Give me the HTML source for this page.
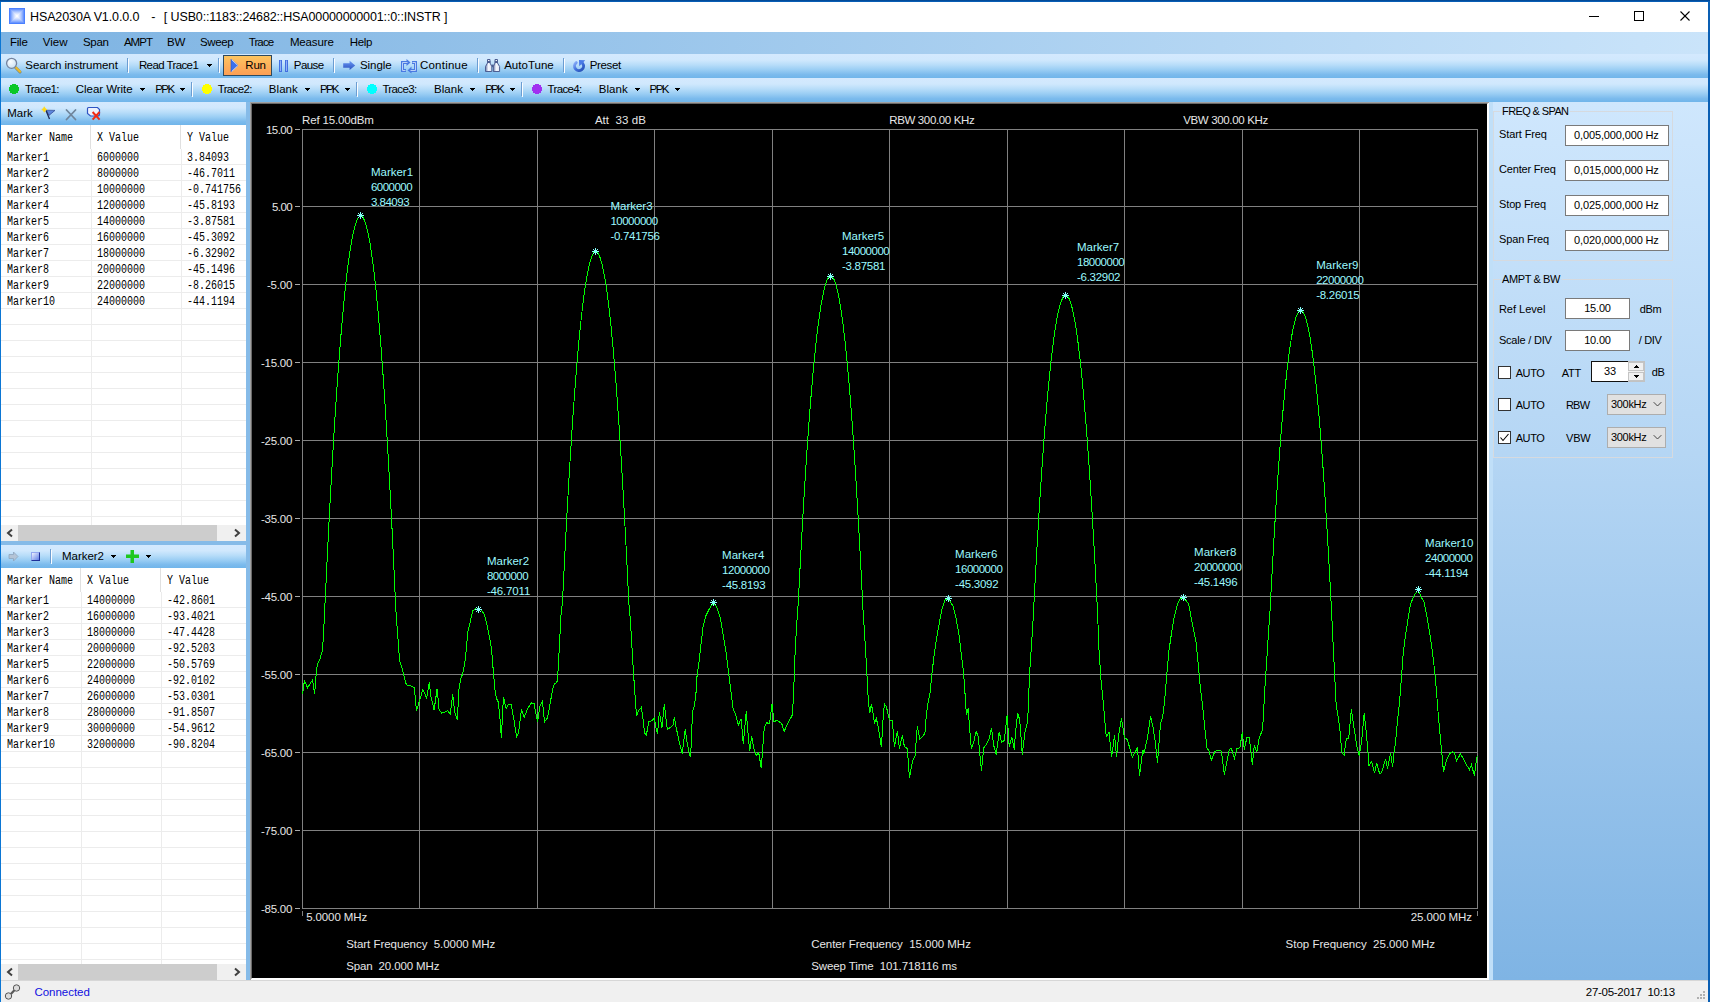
<!DOCTYPE html><html><head><meta charset="utf-8"><title>HSA2030A V1.0.0.0</title><style>
*{box-sizing:border-box;margin:0;padding:0}
html,body{width:1710px;height:1002px;overflow:hidden;background:#fff}
body{position:relative;font-family:"Liberation Sans",sans-serif;font-size:12px;color:#000;line-height:1}
.a{position:absolute;white-space:pre}
.t{position:absolute;white-space:pre;font-size:11.5px;line-height:14px;height:14px;color:#000}
.m{position:absolute;white-space:pre;font-family:"Liberation Mono",monospace;font-size:12px;line-height:14px;height:14px;color:#000;transform-origin:0 50%;transform:scaleX(.8333)}
.p{position:absolute;white-space:pre;font-size:11px;line-height:14px;height:14px;color:#000}
.c{position:absolute;white-space:pre;font-size:11.5px;line-height:14px;height:14px;color:#e6e6e6}
.k{position:absolute;white-space:pre;font-size:11.5px;line-height:14px;height:14px;color:#9cf9ff}
.tb{position:absolute;left:1px;width:1707px;background:linear-gradient(#d4e9fe 0%,#d0e8fd 25%,#b8ddf9 45%,#9bcef4 65%,#7cbbed 85%,#70b5ea 100%)}
.sep{position:absolute;width:1px;height:14px;background:#6b9dd2;box-shadow:1px 1px 0 #fbfdff}
.dot{position:absolute;width:10px;height:10px;border-radius:5px}
.inp{position:absolute;background:#fff;border:1px solid #7a7a7a}
.cb{position:absolute;width:13px;height:13px;background:#fff;border:1px solid #333}
.combo{position:absolute;background:#e1e1e1;border:1px solid #adadad}
.gb{position:absolute;border:1px solid #d6dadf}
.hl{position:absolute;height:1px;background:#ececec}
.vl{position:absolute;width:1px;background:#ececec}
</style></head><body>
<div class="a" style="left:0;top:0;width:1710px;height:2px;background:linear-gradient(#00438c,#0a66c2)"></div>
<div class="a" style="left:0;top:2px;width:1px;height:1000px;background:#0b76d4"></div>
<div class="a" style="left:1708px;top:2px;width:2px;height:1000px;background:#0a5fb4"></div>
<div class="a" style="left:1px;top:2px;width:1707px;height:30px;background:#fff"></div>
<div class="a" style="left:9px;top:8px;width:16px;height:16px;background:#4a80ff"></div><div class="a" style="left:10px;top:9px;width:14px;height:14px;background:#6a96ff"></div><div class="a" style="left:11px;top:10px;width:12px;height:12px;background:#8aadff"></div><div class="a" style="left:12px;top:11px;width:10px;height:10px;background:#a6c1ff"></div><div class="a" style="left:13px;top:12px;width:8px;height:8px;background:#bfd2ff"></div><div class="a" style="left:14px;top:13px;width:6px;height:6px;background:#d6e2ff"></div><div class="a" style="left:15px;top:14px;width:4px;height:4px;background:#eaf0ff"></div><div class="a" style="left:16px;top:15px;width:2px;height:2px;background:#fbfcff"></div>
<div id="title" class="t" style="left:30px;top:9.57px;font-size:12.5px;color:#000"><span style="letter-spacing:-.11px">HSA2030A V1.0.0.0</span><span style="letter-spacing:.5px">   -  </span><span style="letter-spacing:-.13px">[ USB0::1183::24682::HSA00000000001::0::INSTR ]</span></div>
<svg class="a" style="left:1580px;top:2px" width="128" height="30" viewBox="0 0 128 30"><g stroke="#000" stroke-width="1" fill="none" shape-rendering="crispEdges"><line x1="9" y1="14.5" x2="19" y2="14.5"/><rect x="54.5" y="9.5" width="9" height="9"/></g><g stroke="#000" stroke-width="1.1" fill="none"><line x1="100.5" y1="9.5" x2="109.5" y2="18.5"/><line x1="109.5" y1="9.5" x2="100.5" y2="18.5"/></g></svg>
<div class="a" style="left:1px;top:32px;width:1707px;height:22px;background:linear-gradient(90deg,#7db3e2 0%,#cae4fa 100%)"></div>
<div id="x1" class="t" style="left:9.90px;top:35.02px;letter-spacing:-0.187px;">File</div>
<div id="x2" class="t" style="left:42.70px;top:35.02px;letter-spacing:0.041px;">View</div>
<div id="x3" class="t" style="left:83.00px;top:35.02px;letter-spacing:-0.311px;">Span</div>
<div id="x4" class="t" style="left:123.90px;top:35.02px;letter-spacing:-0.963px;">AMPT</div>
<div id="x5" class="t" style="left:167.10px;top:35.02px;letter-spacing:-0.366px;">BW</div>
<div id="x6" class="t" style="left:199.90px;top:35.02px;letter-spacing:-0.331px;">Sweep</div>
<div id="x7" class="t" style="left:248.70px;top:35.02px;letter-spacing:-0.874px;">Trace</div>
<div id="x8" class="t" style="left:289.90px;top:35.02px;letter-spacing:-0.131px;">Measure</div>
<div id="x9" class="t" style="left:349.70px;top:35.02px;letter-spacing:-0.314px;">Help</div>
<div class="tb" style="top:54px;height:24px"></div>
<div class="tb" style="top:78px;height:24px"></div>
<svg class="a" style="left:4px;top:56px" width="19" height="19" viewBox="4 56 19 19"><defs><radialGradient id="lens" cx=".4" cy=".35" r=".7"><stop offset="0" stop-color="#fafdff"/><stop offset="1" stop-color="#c9e0f3"/></radialGradient></defs><line x1="15.8" y1="67.8" x2="20" y2="72" stroke="#5b4a18" stroke-width="3" stroke-linecap="round" opacity=".55"/><line x1="15.6" y1="67.2" x2="20" y2="71.6" stroke="#e8b82c" stroke-width="2.2" stroke-linecap="round"/><circle cx="11.6" cy="63.3" r="5" fill="url(#lens)" stroke="#73839f" stroke-width="1.3"/></svg>
<div id="x10" class="t" style="left:25.30px;top:58.32px;letter-spacing:-0.045px;">Search instrument</div>
<div class="sep" style="left:127px;top:58px"></div>
<div id="x11" class="t" style="left:138.90px;top:58.32px;letter-spacing:-0.593px;">Read Trace1</div>
<svg class="a" style="left:207px;top:64px" width="5" height="3" viewBox="0 0 5 3" shape-rendering="crispEdges"><path d="M0 0h5v1h-1v1h-1v1h-1v-1h-1v-1h-1z" fill="#000"/></svg>
<div class="sep" style="left:218px;top:58px"></div>
<div class="a" style="left:223px;top:55px;width:49px;height:21px;border:1px solid #2d4a60;background:linear-gradient(#fdc560,#fdb05a 50%,#fd9f55)"></div>
<svg class="a" style="left:229px;top:57px" width="11" height="17" viewBox="229 57 11 17"><path d="M231 59L238 65.5L231 72Z" fill="#3d70ea" stroke="#2c55c8" stroke-width=".6"/><path d="M231.6 59.6L237.6 65.3" stroke="#dfe9ff" stroke-width=".8"/><path d="M237.6 65.9L231.6 71.6" stroke="#f4f8ff" stroke-width=".8"/></svg>
<div id="x12" class="t" style="left:245.30px;top:58.32px;letter-spacing:-0.198px;">Run</div>
<svg class="a" style="left:278px;top:59px" width="11" height="14" viewBox="278 59 11 14"><rect x="279" y="60" width="3" height="12" fill="#426fe0"/><rect x="280" y="60.5" width="1" height="10.5" fill="#90b0f6"/><rect x="285" y="60" width="3" height="12" fill="#426fe0"/><rect x="286" y="60.5" width="1" height="10.5" fill="#90b0f6"/></svg>
<div id="x13" class="t" style="left:293.80px;top:58.32px;letter-spacing:-0.579px;">Pause</div>
<div class="sep" style="left:333px;top:58px"></div>
<svg class="a" style="left:342px;top:59px" width="15" height="13" viewBox="342 59 15 13"><defs><linearGradient id="ar" x1="0" y1="0" x2="0" y2="1"><stop offset="0" stop-color="#6a98f4"/><stop offset="1" stop-color="#2a52c0"/></linearGradient></defs><path d="M343.2 63.3H349.6V60.8L355.2 65.4L349.6 70V67.7H343.2Z" fill="url(#ar)"/></svg>
<div id="x14" class="t" style="left:359.90px;top:58.32px;letter-spacing:-0.045px;">Single</div>
<svg class="a" style="left:400px;top:58px" width="18" height="16" viewBox="400 58 18 16"><g fill="none" stroke="#4a7ae2" stroke-width="3" stroke-linejoin="miter"><path d="M407 62.5H402.5V70.5H406"/><path d="M411 70.5H415.5V62.5H412"/></g><path d="M406.5 59L410.5 62.5L406.5 66Z" fill="#4a7ae2"/><path d="M411.5 66.5L407.5 70.5L411.5 73.5Z" fill="#4a7ae2"/><g fill="none" stroke="#b9d0f8" stroke-width="1"><path d="M407.5 62.5H402.5V70.5H405.5"/><path d="M410.5 70.5H415.5V62.5H412.5"/></g></svg>
<div id="x15" class="t" style="left:419.90px;top:58.32px;letter-spacing:0.236px;">Continue</div>
<div class="sep" style="left:477px;top:58px"></div>
<svg class="a" style="left:484px;top:58px" width="18" height="15" viewBox="484 58 18 15"><defs><linearGradient id="bn" x1="0" y1="0" x2="1" y2="0"><stop offset="0" stop-color="#6676aa"/><stop offset=".45" stop-color="#f4f7fd"/><stop offset="1" stop-color="#dfe6f6"/></linearGradient></defs><g stroke="#4d5e92" stroke-width="1" fill="url(#bn)"><path d="M485.5 71.5V66.5L487.5 63V59.5H490V63L491.8 66.5V71.5Z"/><path d="M493.3 71.5V66.5L495 63V59.5H497.5V63L499.6 66.5V71.5Z"/></g><g fill="#4d5e92"><rect x="487" y="61" width="3.4" height="2"/><rect x="494.8" y="61" width="3.2" height="2"/><rect x="491.6" y="64.6" width="2" height="2.6"/></g></svg>
<div id="x16" class="t" style="left:504.20px;top:58.32px;letter-spacing:0.010px;">AutoTune</div>
<div class="sep" style="left:563px;top:58px"></div>
<svg class="a" style="left:571px;top:58px" width="16" height="16" viewBox="571 58 16 16"><defs><linearGradient id="pg" x1="0" y1="0" x2="1" y2="1"><stop offset="0" stop-color="#86aaf8"/><stop offset=".5" stop-color="#3f6fdc"/><stop offset="1" stop-color="#2650b4"/></linearGradient></defs><path d="M576.2 62.6A4.5 4.5 0 1 0 582.6 63.4" fill="none" stroke="url(#pg)" stroke-width="2.9" stroke-linecap="round"/><path d="M579 59.9L585.2 60.3L582.6 63L579.2 66.2Z" fill="#4a7ae6"/></svg>
<div id="x17" class="t" style="left:589.70px;top:58.32px;letter-spacing:-0.336px;">Preset</div>
<svg class="a" style="left:9px;top:84px" width="10" height="10" viewBox="0 0 10 10" shape-rendering="crispEdges"><circle cx="5" cy="5" r="5" fill="#0ac828"/></svg>
<div id="x18" class="t" style="left:24.90px;top:82.02px;letter-spacing:-0.664px;">Trace1:</div>
<div id="x19" class="t" style="left:75.80px;top:82.02px;letter-spacing:-0.054px;">Clear Write</div>
<svg class="a" style="left:140px;top:88px" width="5" height="3" viewBox="0 0 5 3" shape-rendering="crispEdges"><path d="M0 0h5v1h-1v1h-1v1h-1v-1h-1v-1h-1z" fill="#000"/></svg>
<div id="x20" class="t" style="left:155.20px;top:82.02px;letter-spacing:-1.572px;">PPK</div>
<svg class="a" style="left:180px;top:88px" width="5" height="3" viewBox="0 0 5 3" shape-rendering="crispEdges"><path d="M0 0h5v1h-1v1h-1v1h-1v-1h-1v-1h-1z" fill="#000"/></svg>
<div class="sep" style="left:191px;top:82px"></div>
<svg class="a" style="left:202px;top:84px" width="10" height="10" viewBox="0 0 10 10" shape-rendering="crispEdges"><circle cx="5" cy="5" r="5" fill="#ffff00"/></svg>
<div id="x21" class="t" style="left:217.70px;top:82.02px;letter-spacing:-0.635px;">Trace2:</div>
<div id="x22" class="t" style="left:268.80px;top:82.02px;letter-spacing:0.067px;">Blank</div>
<svg class="a" style="left:305px;top:88px" width="5" height="3" viewBox="0 0 5 3" shape-rendering="crispEdges"><path d="M0 0h5v1h-1v1h-1v1h-1v-1h-1v-1h-1z" fill="#000"/></svg>
<div id="x23" class="t" style="left:320.00px;top:82.02px;letter-spacing:-1.739px;">PPK</div>
<svg class="a" style="left:345px;top:88px" width="5" height="3" viewBox="0 0 5 3" shape-rendering="crispEdges"><path d="M0 0h5v1h-1v1h-1v1h-1v-1h-1v-1h-1z" fill="#000"/></svg>
<div class="sep" style="left:356px;top:82px"></div>
<svg class="a" style="left:367px;top:84px" width="10" height="10" viewBox="0 0 10 10" shape-rendering="crispEdges"><circle cx="5" cy="5" r="5" fill="#00ffff"/></svg>
<div id="x24" class="t" style="left:382.40px;top:82.02px;letter-spacing:-0.621px;">Trace3:</div>
<div id="x25" class="t" style="left:434.00px;top:82.02px;letter-spacing:0.067px;">Blank</div>
<svg class="a" style="left:470px;top:88px" width="5" height="3" viewBox="0 0 5 3" shape-rendering="crispEdges"><path d="M0 0h5v1h-1v1h-1v1h-1v-1h-1v-1h-1z" fill="#000"/></svg>
<div id="x26" class="t" style="left:485.20px;top:82.02px;letter-spacing:-1.739px;">PPK</div>
<svg class="a" style="left:510px;top:88px" width="5" height="3" viewBox="0 0 5 3" shape-rendering="crispEdges"><path d="M0 0h5v1h-1v1h-1v1h-1v-1h-1v-1h-1z" fill="#000"/></svg>
<div class="sep" style="left:521px;top:82px"></div>
<svg class="a" style="left:532px;top:84px" width="10" height="10" viewBox="0 0 10 10" shape-rendering="crispEdges"><circle cx="5" cy="5" r="5" fill="#a030f0"/></svg>
<div id="x27" class="t" style="left:547.60px;top:82.02px;letter-spacing:-0.678px;">Trace4:</div>
<div id="x28" class="t" style="left:598.80px;top:82.02px;letter-spacing:0.047px;">Blank</div>
<svg class="a" style="left:635px;top:88px" width="5" height="3" viewBox="0 0 5 3" shape-rendering="crispEdges"><path d="M0 0h5v1h-1v1h-1v1h-1v-1h-1v-1h-1z" fill="#000"/></svg>
<div id="x29" class="t" style="left:649.50px;top:82.02px;letter-spacing:-1.539px;">PPK</div>
<svg class="a" style="left:675px;top:88px" width="5" height="3" viewBox="0 0 5 3" shape-rendering="crispEdges"><path d="M0 0h5v1h-1v1h-1v1h-1v-1h-1v-1h-1z" fill="#000"/></svg>
<div class="a" style="left:1px;top:102px;width:249px;height:878px;background:#86bbe8"></div>
<div class="a" style="left:1px;top:102px;width:245px;height:23px;background:linear-gradient(#d4e9fe 0%,#d0e8fd 25%,#b8ddf9 45%,#9bcef4 65%,#7cbbed 85%,#70b5ea 100%)"></div>
<div id="x30" class="t" style="left:7.30px;top:105.92px;letter-spacing:-0.012px;">Mark</div>
<svg class="a" style="left:41px;top:105px" width="16" height="16" viewBox="41 105 16 16"><path d="M46.2 110.2L55 110.4L49 115.4Z" fill="#5d86dc" stroke="#2c4690" stroke-width=".7"/><line x1="46" y1="110.5" x2="49.5" y2="119" stroke="#1c2a58" stroke-width="1.3"/><path d="M44.3 106.8L45.2 108.6L46.8 109.5L45.2 110.4L44.3 112.2L43.4 110.4L41.8 109.5L43.4 108.6Z" fill="#ffd91c" stroke="#ffd91c" stroke-width=".8"/></svg>
<svg class="a" style="left:64px;top:107px" width="15" height="15" viewBox="64 107 15 15"><g stroke="#6f859b" stroke-width="1.8" stroke-linecap="round"><line x1="66.5" y1="110" x2="75.5" y2="119.5"/><line x1="75.5" y1="110" x2="66.5" y2="119.5"/></g></svg>
<svg class="a" style="left:86px;top:105px" width="16" height="17" viewBox="86 105 16 17"><path d="M88.5 107.5H97.5L99.5 109.5V114Q99.5 116 97.5 116H90.5L87.5 113.5V108.5Q87.5 107.5 88.5 107.5Z" fill="#eef2fd" stroke="#2f55c4" stroke-width="1.2"/><g stroke="#f02a14" stroke-width="2"><line x1="92.6" y1="112" x2="99.6" y2="119.6"/><line x1="99.6" y1="112" x2="92.6" y2="119.6"/></g></svg>
<div class="a" style="left:1px;top:125px;width:245px;height:400px;background:#fff"></div>
<div id="x31" class="m" style="left:7.0px;top:131.1px">Marker Name</div>
<div id="x32" class="m" style="left:97.0px;top:131.1px">X Value</div>
<div id="x33" class="m" style="left:187.0px;top:131.1px">Y Value</div>
<div class="vl" style="left:90px;top:125px;height:24px;background:#e0e0e0"></div>
<div class="vl" style="left:180px;top:125px;height:24px;background:#e0e0e0"></div>
<div class="hl" style="left:1px;top:164px;width:245px"></div>
<div class="hl" style="left:1px;top:180px;width:245px"></div>
<div class="hl" style="left:1px;top:196px;width:245px"></div>
<div class="hl" style="left:1px;top:212px;width:245px"></div>
<div class="hl" style="left:1px;top:228px;width:245px"></div>
<div class="hl" style="left:1px;top:244px;width:245px"></div>
<div class="hl" style="left:1px;top:260px;width:245px"></div>
<div class="hl" style="left:1px;top:276px;width:245px"></div>
<div class="hl" style="left:1px;top:292px;width:245px"></div>
<div class="hl" style="left:1px;top:308px;width:245px"></div>
<div class="hl" style="left:1px;top:324px;width:245px"></div>
<div class="hl" style="left:1px;top:340px;width:245px"></div>
<div class="hl" style="left:1px;top:356px;width:245px"></div>
<div class="hl" style="left:1px;top:372px;width:245px"></div>
<div class="hl" style="left:1px;top:388px;width:245px"></div>
<div class="hl" style="left:1px;top:404px;width:245px"></div>
<div class="hl" style="left:1px;top:420px;width:245px"></div>
<div class="hl" style="left:1px;top:436px;width:245px"></div>
<div class="hl" style="left:1px;top:452px;width:245px"></div>
<div class="hl" style="left:1px;top:468px;width:245px"></div>
<div class="hl" style="left:1px;top:484px;width:245px"></div>
<div class="hl" style="left:1px;top:500px;width:245px"></div>
<div class="hl" style="left:1px;top:516px;width:245px"></div>
<div class="vl" style="left:91px;top:149px;height:376px"></div>
<div class="vl" style="left:181px;top:149px;height:376px"></div>
<div id="x34" class="m" style="left:7.0px;top:150.8px">Marker1</div>
<div id="x35" class="m" style="left:97.0px;top:150.8px">6000000</div>
<div id="x36" class="m" style="left:187.0px;top:150.8px">3.84093</div>
<div id="x37" class="m" style="left:7.0px;top:166.8px">Marker2</div>
<div id="x38" class="m" style="left:97.0px;top:166.8px">8000000</div>
<div id="x39" class="m" style="left:187.0px;top:166.8px">-46.7011</div>
<div id="x40" class="m" style="left:7.0px;top:182.8px">Marker3</div>
<div id="x41" class="m" style="left:97.0px;top:182.8px">10000000</div>
<div id="x42" class="m" style="left:187.0px;top:182.8px">-0.741756</div>
<div id="x43" class="m" style="left:7.0px;top:198.8px">Marker4</div>
<div id="x44" class="m" style="left:97.0px;top:198.8px">12000000</div>
<div id="x45" class="m" style="left:187.0px;top:198.8px">-45.8193</div>
<div id="x46" class="m" style="left:7.0px;top:214.8px">Marker5</div>
<div id="x47" class="m" style="left:97.0px;top:214.8px">14000000</div>
<div id="x48" class="m" style="left:187.0px;top:214.8px">-3.87581</div>
<div id="x49" class="m" style="left:7.0px;top:230.8px">Marker6</div>
<div id="x50" class="m" style="left:97.0px;top:230.8px">16000000</div>
<div id="x51" class="m" style="left:187.0px;top:230.8px">-45.3092</div>
<div id="x52" class="m" style="left:7.0px;top:246.8px">Marker7</div>
<div id="x53" class="m" style="left:97.0px;top:246.8px">18000000</div>
<div id="x54" class="m" style="left:187.0px;top:246.8px">-6.32902</div>
<div id="x55" class="m" style="left:7.0px;top:262.8px">Marker8</div>
<div id="x56" class="m" style="left:97.0px;top:262.8px">20000000</div>
<div id="x57" class="m" style="left:187.0px;top:262.8px">-45.1496</div>
<div id="x58" class="m" style="left:7.0px;top:278.8px">Marker9</div>
<div id="x59" class="m" style="left:97.0px;top:278.8px">22000000</div>
<div id="x60" class="m" style="left:187.0px;top:278.8px">-8.26015</div>
<div id="x61" class="m" style="left:7.0px;top:294.8px">Marker10</div>
<div id="x62" class="m" style="left:97.0px;top:294.8px">24000000</div>
<div id="x63" class="m" style="left:187.0px;top:294.8px">-44.1194</div>
<div class="a" style="left:1px;top:568px;width:245px;height:396px;background:#fff"></div>
<div id="x64" class="m" style="left:7.0px;top:574.1px">Marker Name</div>
<div id="x65" class="m" style="left:87.0px;top:574.1px">X Value</div>
<div id="x66" class="m" style="left:167.0px;top:574.1px">Y Value</div>
<div class="vl" style="left:80px;top:568px;height:24px;background:#e0e0e0"></div>
<div class="vl" style="left:160px;top:568px;height:24px;background:#e0e0e0"></div>
<div class="hl" style="left:1px;top:607px;width:245px"></div>
<div class="hl" style="left:1px;top:623px;width:245px"></div>
<div class="hl" style="left:1px;top:639px;width:245px"></div>
<div class="hl" style="left:1px;top:655px;width:245px"></div>
<div class="hl" style="left:1px;top:671px;width:245px"></div>
<div class="hl" style="left:1px;top:687px;width:245px"></div>
<div class="hl" style="left:1px;top:703px;width:245px"></div>
<div class="hl" style="left:1px;top:719px;width:245px"></div>
<div class="hl" style="left:1px;top:735px;width:245px"></div>
<div class="hl" style="left:1px;top:751px;width:245px"></div>
<div class="hl" style="left:1px;top:767px;width:245px"></div>
<div class="hl" style="left:1px;top:783px;width:245px"></div>
<div class="hl" style="left:1px;top:799px;width:245px"></div>
<div class="hl" style="left:1px;top:815px;width:245px"></div>
<div class="hl" style="left:1px;top:831px;width:245px"></div>
<div class="hl" style="left:1px;top:847px;width:245px"></div>
<div class="hl" style="left:1px;top:863px;width:245px"></div>
<div class="hl" style="left:1px;top:879px;width:245px"></div>
<div class="hl" style="left:1px;top:895px;width:245px"></div>
<div class="hl" style="left:1px;top:911px;width:245px"></div>
<div class="hl" style="left:1px;top:927px;width:245px"></div>
<div class="hl" style="left:1px;top:943px;width:245px"></div>
<div class="hl" style="left:1px;top:959px;width:245px"></div>
<div class="vl" style="left:81px;top:592px;height:372px"></div>
<div class="vl" style="left:161px;top:592px;height:372px"></div>
<div id="x67" class="m" style="left:7.0px;top:593.8px">Marker1</div>
<div id="x68" class="m" style="left:87.0px;top:593.8px">14000000</div>
<div id="x69" class="m" style="left:167.0px;top:593.8px">-42.8601</div>
<div id="x70" class="m" style="left:7.0px;top:609.8px">Marker2</div>
<div id="x71" class="m" style="left:87.0px;top:609.8px">16000000</div>
<div id="x72" class="m" style="left:167.0px;top:609.8px">-93.4021</div>
<div id="x73" class="m" style="left:7.0px;top:625.8px">Marker3</div>
<div id="x74" class="m" style="left:87.0px;top:625.8px">18000000</div>
<div id="x75" class="m" style="left:167.0px;top:625.8px">-47.4428</div>
<div id="x76" class="m" style="left:7.0px;top:641.8px">Marker4</div>
<div id="x77" class="m" style="left:87.0px;top:641.8px">20000000</div>
<div id="x78" class="m" style="left:167.0px;top:641.8px">-92.5203</div>
<div id="x79" class="m" style="left:7.0px;top:657.8px">Marker5</div>
<div id="x80" class="m" style="left:87.0px;top:657.8px">22000000</div>
<div id="x81" class="m" style="left:167.0px;top:657.8px">-50.5769</div>
<div id="x82" class="m" style="left:7.0px;top:673.8px">Marker6</div>
<div id="x83" class="m" style="left:87.0px;top:673.8px">24000000</div>
<div id="x84" class="m" style="left:167.0px;top:673.8px">-92.0102</div>
<div id="x85" class="m" style="left:7.0px;top:689.8px">Marker7</div>
<div id="x86" class="m" style="left:87.0px;top:689.8px">26000000</div>
<div id="x87" class="m" style="left:167.0px;top:689.8px">-53.0301</div>
<div id="x88" class="m" style="left:7.0px;top:705.8px">Marker8</div>
<div id="x89" class="m" style="left:87.0px;top:705.8px">28000000</div>
<div id="x90" class="m" style="left:167.0px;top:705.8px">-91.8507</div>
<div id="x91" class="m" style="left:7.0px;top:721.8px">Marker9</div>
<div id="x92" class="m" style="left:87.0px;top:721.8px">30000000</div>
<div id="x93" class="m" style="left:167.0px;top:721.8px">-54.9612</div>
<div id="x94" class="m" style="left:7.0px;top:737.8px">Marker10</div>
<div id="x95" class="m" style="left:87.0px;top:737.8px">32000000</div>
<div id="x96" class="m" style="left:167.0px;top:737.8px">-90.8204</div>
<div class="a" style="left:1px;top:525px;width:245px;height:16px;background:#f0f0f0"></div>
<div class="a" style="left:18px;top:525px;width:199px;height:16px;background:#cdcdcd"></div>
<svg class="a" style="left:1px;top:525px" width="245" height="16" viewBox="0 0 245 16"><g fill="none" stroke="#404040" stroke-width="2"><path d="M11 4.5L7 8L11 11.5"/><path d="M234 4.5L238 8L234 11.5"/></g></svg>
<div class="a" style="left:1px;top:964px;width:245px;height:16px;background:#f0f0f0"></div>
<div class="a" style="left:18px;top:964px;width:199px;height:16px;background:#cdcdcd"></div>
<svg class="a" style="left:1px;top:964px" width="245" height="16" viewBox="0 0 245 16"><g fill="none" stroke="#404040" stroke-width="2"><path d="M11 4.5L7 8L11 11.5"/><path d="M234 4.5L238 8L234 11.5"/></g></svg>
<div class="a" style="left:1px;top:545px;width:245px;height:23px;background:linear-gradient(#d4e9fe 0%,#d0e8fd 25%,#b8ddf9 45%,#9bcef4 65%,#7cbbed 85%,#70b5ea 100%)"></div>
<svg class="a" style="left:8px;top:551px" width="11" height="11" viewBox="0 0 11 11"><path d="M1 3.5h4.5V1L10 5.5L5.5 10V7.5H1Z" fill="#b4c4d6" stroke="#8ea4bc" stroke-width=".8"/></svg>
<div class="a" style="left:31px;top:552px;width:9px;height:9px;border-style:solid;border-width:1px;border-color:#93a8f0 #1e2f9a #1e2f9a #93a8f0;background:linear-gradient(135deg,#eef2ff,#5f7fe6)"></div>
<div class="sep" style="left:50px;top:549px"></div>
<div id="x97" class="t" style="left:62.10px;top:549.02px;letter-spacing:-0.051px;">Marker2</div>
<svg class="a" style="left:111px;top:555px" width="5" height="3" viewBox="0 0 5 3" shape-rendering="crispEdges"><path d="M0 0h5v1h-1v1h-1v1h-1v-1h-1v-1h-1z" fill="#000"/></svg>
<svg class="a" style="left:125px;top:549px" width="15" height="15" viewBox="0 0 15 15"><path d="M5.5 1h3.5v4.5H14V9H9v5H5.5V9H1V5.5h4.5Z" fill="#1ec81e"/></svg>
<svg class="a" style="left:146px;top:555px" width="5" height="3" viewBox="0 0 5 3" shape-rendering="crispEdges"><path d="M0 0h5v1h-1v1h-1v1h-1v-1h-1v-1h-1z" fill="#000"/></svg>
<div class="a" style="left:250px;top:102px;width:1239px;height:878px;background:#000;border-style:solid;border-width:2px;border-color:#696969 #fff #fff #696969;box-shadow:inset 0 0 0 0 #000"></div>
<div class="a" style="left:250px;top:102px;width:1239px;height:1px;background:#a0a0a0"></div>
<div class="a" style="left:250px;top:102px;width:1px;height:878px;background:#a0a0a0"></div>
<svg class="a" style="left:0;top:0" width="1710" height="1002" viewBox="0 0 1710 1002"><g stroke="#808080" stroke-width="1" shape-rendering="crispEdges"><line x1="302.5" y1="129" x2="302.5" y2="909"/><line x1="419.5" y1="129" x2="419.5" y2="909"/><line x1="537.5" y1="129" x2="537.5" y2="909"/><line x1="654.5" y1="129" x2="654.5" y2="909"/><line x1="772.5" y1="129" x2="772.5" y2="909"/><line x1="889.5" y1="129" x2="889.5" y2="909"/><line x1="1007.5" y1="129" x2="1007.5" y2="909"/><line x1="1124.5" y1="129" x2="1124.5" y2="909"/><line x1="1242.5" y1="129" x2="1242.5" y2="909"/><line x1="1359.5" y1="129" x2="1359.5" y2="909"/><line x1="1477.5" y1="129" x2="1477.5" y2="909"/><line x1="302" y1="129.5" x2="1478" y2="129.5"/><line x1="295" y1="129.5" x2="300" y2="129.5" stroke="#a8a8a8"/><line x1="302" y1="206.5" x2="1478" y2="206.5"/><line x1="295" y1="206.5" x2="300" y2="206.5" stroke="#a8a8a8"/><line x1="302" y1="284.5" x2="1478" y2="284.5"/><line x1="295" y1="284.5" x2="300" y2="284.5" stroke="#a8a8a8"/><line x1="302" y1="362.5" x2="1478" y2="362.5"/><line x1="295" y1="362.5" x2="300" y2="362.5" stroke="#a8a8a8"/><line x1="302" y1="440.5" x2="1478" y2="440.5"/><line x1="295" y1="440.5" x2="300" y2="440.5" stroke="#a8a8a8"/><line x1="302" y1="518.5" x2="1478" y2="518.5"/><line x1="295" y1="518.5" x2="300" y2="518.5" stroke="#a8a8a8"/><line x1="302" y1="596.5" x2="1478" y2="596.5"/><line x1="295" y1="596.5" x2="300" y2="596.5" stroke="#a8a8a8"/><line x1="302" y1="674.5" x2="1478" y2="674.5"/><line x1="295" y1="674.5" x2="300" y2="674.5" stroke="#a8a8a8"/><line x1="302" y1="752.5" x2="1478" y2="752.5"/><line x1="295" y1="752.5" x2="300" y2="752.5" stroke="#a8a8a8"/><line x1="302" y1="830.5" x2="1478" y2="830.5"/><line x1="295" y1="830.5" x2="300" y2="830.5" stroke="#a8a8a8"/><line x1="302" y1="908.5" x2="1478" y2="908.5"/><line x1="295" y1="908.5" x2="300" y2="908.5" stroke="#a8a8a8"/><line x1="302.5" y1="911" x2="302.5" y2="916"/><line x1="1477.5" y1="911" x2="1477.5" y2="916"/></g><polyline fill="none" stroke="#00ff00" stroke-width="1" shape-rendering="crispEdges" points="302.6,693.8 304.4,680.8 307.6,687.8 312.6,679.8 314.6,693.8 316.6,668.8 317.6,663.9 320.0,658.9 322.0,651.9 323.5,637.9 324.3,616.0 325.3,598.0 326.3,576.7 327.3,556.1 328.3,536.1 329.3,516.6 330.3,497.8 331.3,479.6 332.3,462.0 333.3,445.0 334.3,428.6 335.3,412.8 336.3,397.7 337.3,383.1 338.3,369.2 339.3,355.8 340.3,343.1 341.3,330.9 342.3,319.4 343.3,308.5 344.3,298.2 345.3,288.5 346.3,279.4 347.3,270.9 348.3,263.1 349.3,255.8 350.3,249.1 351.3,243.1 352.3,237.6 353.3,232.8 354.3,228.6 355.3,225.0 356.3,221.9 357.3,219.5 358.3,217.8 359.3,216.6 360.3,216.0 361.3,216.0 362.3,216.7 363.3,218.0 364.3,220.0 365.3,222.6 366.3,225.8 367.3,229.7 368.3,234.2 369.3,239.3 370.3,245.1 371.3,251.5 372.3,258.6 373.3,266.3 374.3,274.7 375.3,283.7 376.3,293.3 377.3,303.6 378.3,314.5 379.3,326.0 380.3,338.2 381.3,351.0 382.3,364.5 383.3,378.6 384.3,393.4 385.3,408.8 386.3,424.8 387.3,441.5 388.3,458.8 389.3,476.7 390.3,495.3 391.3,514.5 392.3,534.4 393.3,554.9 394.3,576.1 395.8,609.0 397.2,628.0 398.4,644.0 399.2,655.9 400.2,662.9 402.4,668.8 404.4,677.8 406.4,684.8 410.8,685.8 414.4,687.8 416.4,710.8 419.2,701.8 422.8,689.8 426.7,697.8 429.3,682.2 430.7,695.8 434.1,709.8 437.1,688.8 439.1,709.8 441.7,713.2 447.7,710.8 450.3,714.2 452.7,693.8 454.7,711.8 457.3,719.7 459.1,687.8 460.7,678.8 462.7,673.8 464.7,663.9 466.3,649.9 467.7,631.9 469.1,626.9 470.7,619.9 472.6,611.0 475.6,609.0 478.2,609.6 481.6,610.0 484.6,615.0 486.6,623.0 489.6,637.9 491.6,649.9 493.2,669.8 495.2,691.8 496.6,698.8 498.2,701.8 499.6,713.8 501.4,737.7 503.4,696.8 506.2,708.8 508.6,704.2 511.2,704.8 513.6,717.7 516.6,736.7 518.6,732.7 521.5,708.8 524.1,717.7 527.5,708.8 531.5,702.8 534.1,703.8 537.5,721.7 540.1,705.8 542.5,701.4 544.5,721.7 547.5,717.7 550.1,703.8 552.5,689.8 554.5,683.8 556.9,682.8 558.1,669.8 559.5,643.9 560.9,616.0 562.5,602.0 563.5,581.2 564.5,561.1 565.5,541.6 566.5,522.8 567.5,504.5 568.5,487.0 569.5,470.0 570.5,453.7 571.5,438.0 572.5,422.9 573.5,408.5 574.5,394.7 575.5,381.6 576.5,369.1 577.5,357.2 578.5,345.9 579.5,335.3 580.5,325.3 581.5,316.0 582.5,307.3 583.5,299.2 584.5,291.7 585.5,284.9 586.5,278.7 587.5,273.2 588.5,268.3 589.5,264.0 590.5,260.4 591.5,257.4 592.5,255.0 593.5,253.2 594.5,252.1 595.5,251.6 596.5,251.8 597.5,252.6 598.5,254.1 599.5,256.1 600.5,258.9 601.5,262.2 602.5,266.2 603.5,270.9 604.5,276.2 605.5,282.1 606.5,288.7 607.5,295.9 608.5,303.8 609.5,312.3 610.5,321.4 611.5,331.2 612.5,341.6 613.5,352.7 614.5,364.4 615.5,376.7 616.5,389.7 617.5,403.3 618.5,417.6 619.5,432.5 620.5,448.0 621.5,464.2 622.5,481.1 623.5,498.6 624.5,516.7 625.5,535.4 626.5,554.8 627.5,574.9 628.9,604.0 630.5,621.9 631.9,645.9 633.3,669.8 634.9,693.8 636.5,716.1 638.5,710.8 641.3,707.4 642.9,717.7 644.5,732.7 646.3,735.3 648.9,721.7 651.9,720.7 654.3,718.3 655.9,727.7 657.5,734.1 659.3,712.2 661.9,727.7 664.3,704.2 665.9,717.7 667.3,729.7 670.4,727.3 672.8,725.7 674.4,717.3 676.2,727.7 678.8,739.7 682.2,754.1 685.2,729.1 687.2,743.7 690.2,757.3 691.4,743.7 692.4,712.2 694.4,705.8 695.8,695.8 697.2,673.8 698.8,663.9 700.8,645.9 703.2,625.9 705.8,616.0 709.8,608.0 713.4,602.6 716.8,607.0 720.3,617.9 722.7,631.9 725.7,649.9 728.3,669.8 730.7,689.8 733.1,708.8 735.7,714.8 738.3,725.3 741.1,718.7 743.3,744.1 746.3,711.2 747.7,729.7 749.7,751.3 751.7,735.7 753.7,747.7 756.1,755.7 758.7,752.7 761.3,768.2 762.7,747.7 764.3,727.7 766.7,722.7 769.6,723.7 772.0,703.8 774.0,721.7 777.0,720.3 781.6,723.3 784.2,731.3 788.6,721.7 792.2,715.3 793.2,701.8 794.2,677.8 795.2,649.9 796.6,625.9 798.2,604.0 799.2,584.2 800.2,564.9 801.2,546.3 802.2,528.3 803.2,511.0 804.2,494.2 805.2,478.1 806.2,462.6 807.2,447.7 808.2,433.4 809.2,419.8 810.2,406.8 811.2,394.3 812.2,382.6 813.2,371.4 814.2,360.8 815.2,350.9 816.2,341.6 817.2,332.9 818.2,324.8 819.2,317.3 820.2,310.5 821.2,304.3 822.2,298.7 823.2,293.7 824.2,289.3 825.2,285.6 826.2,282.5 827.2,279.9 828.2,278.1 829.2,276.8 830.2,276.1 831.2,276.1 832.2,276.7 833.2,278.0 834.2,279.9 835.2,282.4 836.2,285.6 837.2,289.4 838.2,293.9 839.2,299.0 840.2,304.7 841.2,311.1 842.2,318.1 843.2,325.8 844.2,334.1 845.2,343.1 846.2,352.7 847.2,362.9 848.2,373.8 849.2,385.4 850.2,397.5 851.2,410.4 852.2,423.8 853.2,437.9 854.2,452.6 855.2,468.0 856.2,484.1 857.2,500.7 858.2,518.0 859.2,536.0 860.2,554.6 861.2,573.8 862.2,593.7 862.9,608.0 864.5,631.9 865.9,655.9 867.1,677.8 868.4,701.8 869.8,713.4 871.4,704.2 872.8,711.8 874.4,722.7 876.4,718.7 878.4,727.7 881.4,747.3 883.0,719.7 884.4,703.8 886.4,706.8 889.4,719.7 892.4,720.7 894.4,746.7 897.4,730.7 899.4,748.7 902.4,735.3 904.4,746.7 907.4,748.7 909.4,778.2 912.4,761.7 915.0,755.7 917.3,726.3 919.9,739.3 924.9,733.7 926.3,715.7 927.9,703.8 929.9,693.8 931.9,673.8 934.3,653.9 937.3,633.9 939.9,619.9 942.3,608.0 944.9,600.0 948.3,598.6 952.9,606.0 955.9,617.9 958.9,633.9 961.3,653.9 963.5,671.8 964.9,691.8 966.4,715.3 968.2,707.8 969.4,725.7 971.4,749.3 973.8,741.7 976.2,731.3 978.2,736.7 981.4,770.6 983.8,747.7 986.8,743.7 989.4,737.7 991.4,727.7 993.8,745.7 996.2,754.7 999.2,731.7 1001.4,742.1 1004.2,740.7 1007.2,714.8 1009.2,746.7 1011.8,736.7 1014.4,749.7 1015.3,733.7 1017.7,713.4 1019.7,719.7 1022.3,754.7 1024.7,733.7 1027.1,723.7 1028.3,709.8 1029.1,685.8 1030.1,665.8 1031.7,641.9 1033.3,616.0 1034.3,596.5 1035.3,577.7 1036.3,559.4 1037.3,541.8 1038.3,524.7 1039.3,508.3 1040.3,492.5 1041.3,477.3 1042.3,462.7 1043.3,448.7 1044.3,435.3 1045.3,422.6 1046.3,410.4 1047.3,398.9 1048.3,387.9 1049.3,377.6 1050.3,367.9 1051.3,358.8 1052.3,350.3 1053.3,342.4 1054.3,335.1 1055.3,328.4 1056.3,322.4 1057.3,316.9 1058.3,312.1 1059.3,307.8 1060.3,304.2 1061.3,301.2 1062.3,298.8 1063.3,297.0 1064.3,295.8 1065.3,295.2 1066.3,295.2 1067.3,295.9 1068.3,297.2 1069.3,299.1 1070.3,301.7 1071.3,304.8 1072.3,308.6 1073.3,313.1 1074.3,318.1 1075.3,323.8 1076.3,330.1 1077.3,337.1 1078.3,344.7 1079.3,352.9 1080.3,361.7 1081.3,371.2 1082.3,381.2 1083.3,392.0 1084.3,403.3 1085.3,415.3 1086.3,427.9 1087.3,441.1 1088.3,455.0 1089.3,469.5 1090.3,484.6 1091.3,500.3 1092.3,516.7 1093.3,533.7 1094.3,551.4 1095.3,569.6 1096.3,588.5 1097.6,614.0 1099.0,649.9 1101.0,679.8 1103.6,705.8 1106.2,736.7 1109.0,732.1 1111.6,756.7 1114.6,735.3 1116.5,756.7 1118.9,733.7 1121.5,718.3 1124.5,737.7 1127.5,739.7 1130.1,749.7 1132.5,757.3 1137.5,747.7 1139.5,775.6 1142.9,749.7 1143.9,753.7 1147.5,737.7 1150.5,716.1 1153.1,727.7 1155.5,743.7 1157.5,762.7 1160.5,723.7 1162.5,717.7 1164.5,701.8 1166.5,677.8 1168.8,651.9 1171.4,633.9 1174.4,616.0 1177.4,604.0 1179.8,599.0 1183.2,597.6 1186.4,601.0 1188.6,604.0 1192.0,621.9 1196.0,641.9 1198.0,661.9 1200.0,683.8 1203.0,709.8 1205.0,729.7 1207.0,747.7 1209.0,751.3 1211.3,760.3 1214.9,751.3 1217.9,750.1 1221.5,751.3 1224.3,774.6 1226.9,761.7 1229.3,749.7 1231.3,748.3 1234.5,758.3 1236.9,748.7 1239.9,747.7 1242.3,732.3 1244.3,749.7 1246.9,737.3 1249.3,737.3 1252.3,764.7 1254.3,745.7 1256.9,751.7 1259.3,737.7 1262.2,730.7 1263.4,717.7 1264.4,695.8 1265.8,673.8 1267.4,649.9 1268.8,627.9 1270.2,608.0 1271.2,588.8 1272.2,570.3 1273.2,552.4 1274.2,535.1 1275.2,518.5 1276.2,502.5 1277.2,487.2 1278.2,472.5 1279.2,458.4 1280.2,444.9 1281.2,432.2 1282.2,420.0 1283.2,408.5 1284.2,397.6 1285.2,387.4 1286.2,377.7 1287.2,368.8 1288.2,360.5 1289.2,352.8 1290.2,345.7 1291.2,339.3 1292.2,333.5 1293.2,328.4 1294.2,323.9 1295.2,320.0 1296.2,316.8 1297.2,314.2 1298.2,312.3 1299.2,311.0 1300.2,310.3 1301.2,310.3 1302.2,310.9 1303.2,312.1 1304.2,314.0 1305.2,316.5 1306.2,319.6 1307.2,323.4 1308.2,327.8 1309.2,332.8 1310.2,338.5 1311.2,344.8 1312.2,351.8 1313.2,359.4 1314.2,367.6 1315.2,376.4 1316.2,385.9 1317.2,396.0 1318.2,406.8 1319.2,418.2 1320.2,430.2 1321.2,442.8 1322.2,456.1 1323.2,470.0 1324.2,484.6 1325.2,499.8 1326.2,515.6 1327.2,532.1 1328.2,549.2 1329.2,566.9 1330.2,585.3 1331.7,614.0 1333.1,643.9 1334.7,675.8 1336.1,703.8 1338.3,717.7 1340.3,733.7 1341.7,751.7 1344.1,755.3 1346.3,738.7 1348.7,738.7 1351.3,709.4 1353.7,725.7 1356.7,745.7 1359.3,755.7 1361.6,741.7 1364.2,713.4 1366.6,735.7 1369.0,765.6 1371.6,761.7 1374.6,773.2 1376.6,762.7 1379.6,773.6 1381.6,772.6 1385.6,758.7 1387.6,768.6 1390.6,753.3 1392.6,767.2 1394.2,751.3 1395.6,741.7 1397.6,719.7 1399.6,701.8 1401.6,675.8 1403.2,653.9 1405.2,637.9 1407.6,621.9 1410.5,604.0 1414.5,595.0 1418.2,589.6 1421.1,597.0 1424.1,602.0 1426.5,614.0 1429.5,631.9 1432.5,651.9 1434.5,669.8 1436.5,691.8 1438.5,717.7 1440.5,739.7 1441.9,753.7 1443.5,772.0 1446.5,759.7 1449.5,753.7 1452.5,751.7 1454.5,752.7 1456.5,761.3 1460.4,753.7 1463.4,758.7 1466.4,764.7 1469.4,769.6 1471.4,764.7 1474.4,775.6 1476.4,759.7 1477.4,755.7"/><g fill="#86fffa" shape-rendering="crispEdges"><path d="M359 214h3v3h-3zM357 215h7v1h-7zM360 212h1v7h-1zM358 213h1v1h-1zM362 213h1v1h-1zM358 217h1v1h-1zM362 217h1v1h-1z"/><path d="M477 608h3v3h-3zM475 609h7v1h-7zM478 606h1v7h-1zM476 607h1v1h-1zM480 607h1v1h-1zM476 611h1v1h-1zM480 611h1v1h-1z"/><path d="M594 250h3v3h-3zM592 251h7v1h-7zM595 248h1v7h-1zM593 249h1v1h-1zM597 249h1v1h-1zM593 253h1v1h-1zM597 253h1v1h-1z"/><path d="M712 601h3v3h-3zM710 602h7v1h-7zM713 599h1v7h-1zM711 600h1v1h-1zM715 600h1v1h-1zM711 604h1v1h-1zM715 604h1v1h-1z"/><path d="M829 275h3v3h-3zM827 276h7v1h-7zM830 273h1v7h-1zM828 274h1v1h-1zM832 274h1v1h-1zM828 278h1v1h-1zM832 278h1v1h-1z"/><path d="M947 597h3v3h-3zM945 598h7v1h-7zM948 595h1v7h-1zM946 596h1v1h-1zM950 596h1v1h-1zM946 600h1v1h-1zM950 600h1v1h-1z"/><path d="M1064 294h3v3h-3zM1062 295h7v1h-7zM1065 292h1v7h-1zM1063 293h1v1h-1zM1067 293h1v1h-1zM1063 297h1v1h-1zM1067 297h1v1h-1z"/><path d="M1182 596h3v3h-3zM1180 597h7v1h-7zM1183 594h1v7h-1zM1181 595h1v1h-1zM1185 595h1v1h-1zM1181 599h1v1h-1zM1185 599h1v1h-1z"/><path d="M1299 309h3v3h-3zM1297 310h7v1h-7zM1300 307h1v7h-1zM1298 308h1v1h-1zM1302 308h1v1h-1zM1298 312h1v1h-1zM1302 312h1v1h-1z"/><path d="M1417 588h3v3h-3zM1415 589h7v1h-7zM1418 586h1v7h-1zM1416 587h1v1h-1zM1420 587h1v1h-1zM1416 591h1v1h-1zM1420 591h1v1h-1z"/></g></svg>
<div id="x98" class="c" style="left:265.90px;top:122.82px;letter-spacing:-0.510px;">15.00</div>
<div id="x99" class="c" style="left:271.90px;top:199.82px;letter-spacing:-0.540px;">5.00</div>
<div id="x100" class="c" style="left:266.90px;top:277.82px;letter-spacing:-0.198px;">-5.00</div>
<div id="x101" class="c" style="left:260.90px;top:355.82px;letter-spacing:-0.230px;">-15.00</div>
<div id="x102" class="c" style="left:260.90px;top:433.82px;letter-spacing:-0.230px;">-25.00</div>
<div id="x103" class="c" style="left:260.90px;top:511.82px;letter-spacing:-0.230px;">-35.00</div>
<div id="x104" class="c" style="left:260.90px;top:589.82px;letter-spacing:-0.230px;">-45.00</div>
<div id="x105" class="c" style="left:260.90px;top:667.82px;letter-spacing:-0.230px;">-55.00</div>
<div id="x106" class="c" style="left:260.90px;top:745.82px;letter-spacing:-0.230px;">-65.00</div>
<div id="x107" class="c" style="left:260.90px;top:823.82px;letter-spacing:-0.230px;">-75.00</div>
<div id="x108" class="c" style="left:260.90px;top:901.82px;letter-spacing:-0.230px;">-85.00</div>
<div id="x109" class="c" style="left:302.00px;top:113.02px;letter-spacing:-0.147px;">Ref 15.00dBm</div>
<div id="x110" class="c" style="left:594.90px;top:113.02px;letter-spacing:0.055px;">Att  33 dB</div>
<div id="x111" class="c" style="left:889.20px;top:113.02px;letter-spacing:-0.350px;">RBW 300.00 KHz</div>
<div id="x112" class="c" style="left:1183.20px;top:113.02px;letter-spacing:-0.347px;">VBW 300.00 KHz</div>
<div id="x113" class="c" style="left:306.20px;top:910.02px;letter-spacing:-0.117px;">5.0000 MHz</div>
<div id="x114" class="c" style="left:1410.70px;top:910.02px;letter-spacing:-0.067px;">25.000 MHz</div>
<div id="x115" class="c" style="left:346.20px;top:937.02px;letter-spacing:-0.041px;">Start Frequency  5.0000 MHz</div>
<div id="x116" class="c" style="left:346.20px;top:958.72px;letter-spacing:-0.137px;">Span  20.000 MHz</div>
<div id="x117" class="c" style="left:811.20px;top:937.02px;letter-spacing:-0.027px;">Center Frequency  15.000 MHz</div>
<div id="x118" class="c" style="left:811.20px;top:958.72px;letter-spacing:-0.097px;">Sweep Time  101.718116 ms</div>
<div id="x119" class="c" style="left:1285.60px;top:937.02px;letter-spacing:-0.003px;">Stop Frequency  25.000 MHz</div>
<div id="x120" class="k" style="left:370.90px;top:164.92px;letter-spacing:0.006px;">Marker1</div>
<div id="x121" class="k" style="left:370.90px;top:179.92px;letter-spacing:-0.505px;">6000000</div>
<div id="x122" class="k" style="left:370.90px;top:194.92px;letter-spacing:-0.476px;">3.84093</div>
<div id="x123" class="k" style="left:486.90px;top:553.82px;letter-spacing:0.006px;">Marker2</div>
<div id="x124" class="k" style="left:486.90px;top:568.82px;letter-spacing:-0.505px;">8000000</div>
<div id="x125" class="k" style="left:486.90px;top:583.82px;letter-spacing:-0.162px;">-46.7011</div>
<div id="x126" class="k" style="left:610.40px;top:198.72px;letter-spacing:0.006px;">Marker3</div>
<div id="x127" class="k" style="left:610.40px;top:213.72px;letter-spacing:-0.491px;">10000000</div>
<div id="x128" class="k" style="left:610.40px;top:228.72px;letter-spacing:-0.283px;">-0.741756</div>
<div id="x129" class="k" style="left:722.10px;top:547.82px;letter-spacing:0.006px;">Marker4</div>
<div id="x130" class="k" style="left:722.10px;top:562.82px;letter-spacing:-0.491px;">12000000</div>
<div id="x131" class="k" style="left:722.10px;top:577.82px;letter-spacing:-0.270px;">-45.8193</div>
<div id="x132" class="k" style="left:842.00px;top:228.92px;letter-spacing:0.006px;">Marker5</div>
<div id="x133" class="k" style="left:842.00px;top:243.92px;letter-spacing:-0.491px;">14000000</div>
<div id="x134" class="k" style="left:842.00px;top:258.92px;letter-spacing:-0.270px;">-3.87581</div>
<div id="x135" class="k" style="left:955.10px;top:546.82px;letter-spacing:0.006px;">Marker6</div>
<div id="x136" class="k" style="left:955.10px;top:561.82px;letter-spacing:-0.491px;">16000000</div>
<div id="x137" class="k" style="left:955.10px;top:576.82px;letter-spacing:-0.270px;">-45.3092</div>
<div id="x138" class="k" style="left:1077.00px;top:239.82px;letter-spacing:0.006px;">Marker7</div>
<div id="x139" class="k" style="left:1077.00px;top:254.82px;letter-spacing:-0.491px;">18000000</div>
<div id="x140" class="k" style="left:1077.00px;top:269.82px;letter-spacing:-0.270px;">-6.32902</div>
<div id="x141" class="k" style="left:1194.10px;top:544.82px;letter-spacing:0.006px;">Marker8</div>
<div id="x142" class="k" style="left:1194.10px;top:559.82px;letter-spacing:-0.491px;">20000000</div>
<div id="x143" class="k" style="left:1194.10px;top:574.82px;letter-spacing:-0.270px;">-45.1496</div>
<div id="x144" class="k" style="left:1316.20px;top:257.82px;letter-spacing:0.006px;">Marker9</div>
<div id="x145" class="k" style="left:1316.20px;top:272.82px;letter-spacing:-0.491px;">22000000</div>
<div id="x146" class="k" style="left:1316.20px;top:287.82px;letter-spacing:-0.270px;">-8.26015</div>
<div id="x147" class="k" style="left:1425.10px;top:535.52px;letter-spacing:-0.043px;">Marker10</div>
<div id="x148" class="k" style="left:1425.10px;top:550.52px;letter-spacing:-0.491px;">24000000</div>
<div id="x149" class="k" style="left:1425.10px;top:565.52px;letter-spacing:-0.162px;">-44.1194</div>
<div class="a" style="left:1489px;top:102px;width:4px;height:878px;background:#c0dff8"></div>
<div class="a" style="left:1493px;top:102px;width:215px;height:878px;background:linear-gradient(#cfe7fd 0%,#b5d6f4 40%,#7fb4e4 100%)"></div>
<div class="gb" style="left:1493px;top:111px;width:180px;height:150px"></div>
<div class="gb" style="left:1493px;top:279px;width:180px;height:179px"></div>
<div class="a" style="left:1500px;top:111px;width:70px;height:1px;background:#cde5fc"></div>
<div class="a" style="left:1500px;top:279px;width:62px;height:1px;background:#bedcf7"></div>
<div id="x150" class="p" style="left:1502.10px;top:104.19px;letter-spacing:-0.617px;">FREQ &amp; SPAN</div>
<div id="x151" class="p" style="left:1502.10px;top:272.19px;letter-spacing:-0.416px;">AMPT &amp; BW</div>
<div id="x152" class="p" style="left:1499.10px;top:127.19px;letter-spacing:-0.124px;">Start Freq</div>
<div class="inp" style="left:1565px;top:125px;width:104px;height:21px"></div>
<div id="x153" class="p" style="left:1574.10px;top:128.19px;letter-spacing:-0.140px;">0,005,000,000 Hz</div>
<div id="x154" class="p" style="left:1499.10px;top:162.19px;letter-spacing:-0.193px;">Center Freq</div>
<div class="inp" style="left:1565px;top:160px;width:104px;height:21px"></div>
<div id="x155" class="p" style="left:1574.10px;top:163.19px;letter-spacing:-0.140px;">0,015,000,000 Hz</div>
<div id="x156" class="p" style="left:1499.10px;top:197.19px;letter-spacing:-0.160px;">Stop Freq</div>
<div class="inp" style="left:1565px;top:195px;width:104px;height:21px"></div>
<div id="x157" class="p" style="left:1574.10px;top:198.19px;letter-spacing:-0.140px;">0,025,000,000 Hz</div>
<div id="x158" class="p" style="left:1499.10px;top:232.19px;letter-spacing:-0.178px;">Span Freq</div>
<div class="inp" style="left:1565px;top:230px;width:104px;height:21px"></div>
<div id="x159" class="p" style="left:1574.10px;top:233.19px;letter-spacing:-0.140px;">0,020,000,000 Hz</div>
<div id="x160" class="p" style="left:1498.90px;top:301.69px;letter-spacing:-0.000px;">Ref Level</div>
<div class="inp" style="left:1565px;top:298px;width:65px;height:21px"></div>
<div id="x161" class="p" style="left:1584.20px;top:301.19px;letter-spacing:-0.192px;">15.00</div>
<div id="x162" class="p" style="left:1639.70px;top:301.69px;letter-spacing:-0.275px;">dBm</div>
<div id="x163" class="p" style="left:1498.90px;top:333.19px;letter-spacing:-0.206px;">Scale / DIV</div>
<div class="inp" style="left:1565px;top:330px;width:65px;height:21px"></div>
<div id="x164" class="p" style="left:1584.20px;top:332.69px;letter-spacing:-0.192px;">10.00</div>
<div id="x165" class="p" style="left:1638.70px;top:333.19px;letter-spacing:-0.334px;">/ DIV</div>
<div class="cb" style="left:1498px;top:366px"></div>
<div id="x166" class="p" style="left:1515.70px;top:366.19px;letter-spacing:-0.415px;">AUTO</div>
<div id="x167" class="p" style="left:1561.80px;top:366.19px;letter-spacing:-0.323px;">ATT</div>
<div class="cb" style="left:1498px;top:398px"></div>
<div id="x168" class="p" style="left:1515.70px;top:397.99px;letter-spacing:-0.415px;">AUTO</div>
<div id="x169" class="p" style="left:1566.00px;top:397.99px;letter-spacing:-0.819px;">RBW</div>
<div class="cb" style="left:1498px;top:431px"></div>
<svg class="a" style="left:1498px;top:431px" width="13" height="13" viewBox="0 0 13 13"><path d="M2.5 6.5L5 9.5L10.5 3" fill="none" stroke="#000" stroke-width="1.1"/></svg>
<div id="x170" class="p" style="left:1515.70px;top:430.79px;letter-spacing:-0.415px;">AUTO</div>
<div id="x171" class="p" style="left:1566.00px;top:430.79px;letter-spacing:-0.187px;">VBW</div>
<div class="a" style="left:1591px;top:361px;width:54px;height:21px;background:#f0f0f0;border:1px solid #c2c2c2"></div><div class="a" style="left:1591px;top:361px;width:37px;height:21px;background:#fff;border-style:solid;border-color:#111;border-width:1px 0 1px 1px"></div>
<div id="x172" class="p" style="left:1604.10px;top:364.19px;letter-spacing:-0.125px;">33</div>
<div class="a" style="left:1628px;top:362px;width:16px;height:9px;background:#f0f0f0;border:1px solid #c4c4c4"></div>
<div class="a" style="left:1628px;top:372px;width:16px;height:9px;background:#f0f0f0;border:1px solid #c4c4c4"></div>
<svg class="a" style="left:1633.5px;top:365px" width="5" height="3" viewBox="0 0 5 3" shape-rendering="crispEdges"><path d="M2 0h1v1h1v1h1v1h-5v-1h1v-1h1z" fill="#000"/></svg>
<svg class="a" style="left:1634px;top:375px" width="5" height="3" viewBox="0 0 5 3" shape-rendering="crispEdges"><path d="M0 0h5v1h-1v1h-1v1h-1v-1h-1v-1h-1z" fill="#000"/></svg>
<div id="x173" class="p" style="left:1651.70px;top:365.19px;letter-spacing:-0.284px;">dB</div>
<div class="combo" style="left:1607px;top:394px;width:59px;height:21px"></div>
<div id="x174" class="p" style="left:1611.00px;top:397.19px;letter-spacing:-0.319px;">300kHz</div>
<svg class="a" style="left:1653px;top:401px" width="9" height="7" viewBox="0 0 9 7"><path d="M.7 1.2L4.5 5L8.3 1.2" fill="none" stroke="#444" stroke-width="1"/></svg>
<div class="combo" style="left:1607px;top:427px;width:59px;height:21px"></div>
<div id="x175" class="p" style="left:1611.00px;top:430.19px;letter-spacing:-0.319px;">300kHz</div>
<svg class="a" style="left:1653px;top:434px" width="9" height="7" viewBox="0 0 9 7"><path d="M.7 1.2L4.5 5L8.3 1.2" fill="none" stroke="#444" stroke-width="1"/></svg>
<div class="a" style="left:1px;top:980px;width:1707px;height:22px;background:#f0f0f0;border-top:1px solid #d7d7d7"></div>
<svg class="a" style="left:4px;top:983px" width="18" height="18" viewBox="0 0 18 18"><line x1="5" y1="13" x2="12.5" y2="5" stroke="#5a5a5a" stroke-width="2.2"/><circle cx="12.5" cy="5" r="3.2" fill="#dcdcdc" stroke="#555" stroke-width="1"/><circle cx="4.5" cy="13" r="3.2" fill="#dcdcdc" stroke="#555" stroke-width="1"/></svg>
<div id="x176" class="t" style="left:34.40px;top:984.52px;letter-spacing:-0.022px;color:#1010e0">Connected</div>
<div id="x177" class="t" style="left:1585.80px;top:985.42px;letter-spacing:-0.294px;color:#000">27-05-2017  10:13</div>
<svg class="a" style="left:1696px;top:990px" width="10" height="10" viewBox="0 0 10 10"><g fill="#b0b0b0"><rect x="7" y="1" width="2" height="2"/><rect x="4" y="4" width="2" height="2"/><rect x="7" y="4" width="2" height="2"/><rect x="1" y="7" width="2" height="2"/><rect x="4" y="7" width="2" height="2"/><rect x="7" y="7" width="2" height="2"/></g></svg>
</body></html>
